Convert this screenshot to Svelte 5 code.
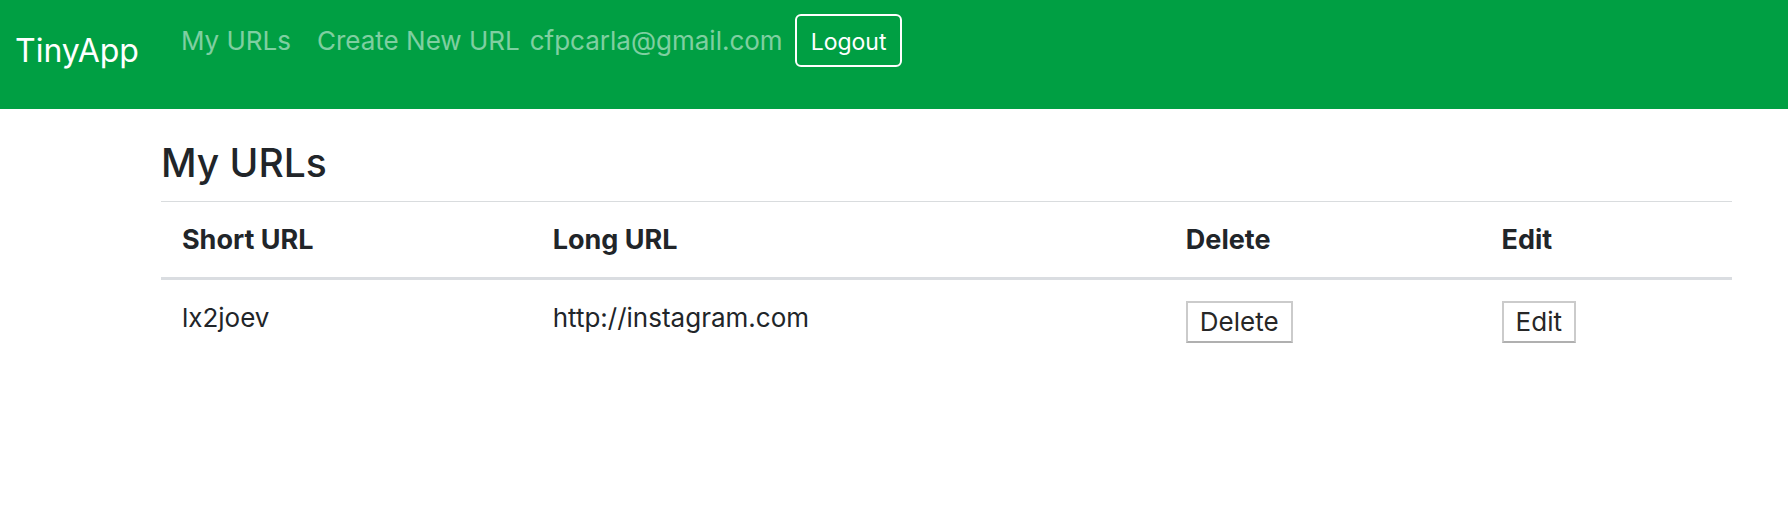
<script>
  const urls = [{ short: 'lx2joev', long: 'http://instagram.com' }];
</script>

<header>
  <nav>
    <a class="brand" href="#home">TinyApp</a>
    <a class="link" href="#urls">My URLs</a>
    <a class="link create" href="#new">Create New URL</a>
    <span class="email">cfpcarla@gmail.com</span>
    <button class="logout" type="button">Logout</button>
  </nav>
</header>

<main>
  <h1>My URLs</h1>
  <table>
    <colgroup>
      <col class="short" />
      <col class="long" />
      <col class="delete" />
      <col class="edit" />
    </colgroup>
    <thead>
      <tr>
        <th scope="col">Short URL</th>
        <th scope="col">Long URL</th>
        <th scope="col">Delete</th>
        <th scope="col">Edit</th>
      </tr>
    </thead>
    <tbody>
      {#each urls as url}
        <tr>
          <td>{url.short}</td>
          <td>{url.long}</td>
          <td><button class="action" type="button">Delete</button></td>
          <td><button class="action" type="button">Edit</button></td>
        </tr>
      {/each}
    </tbody>
  </table>
</main>

<style>
  :global(body) {
    margin: 0;
    background: #fff;
    color: #212529;
    font-family: Inter, 'Liberation Sans', sans-serif;
    font-size: 26px;
    line-height: 40px;
  }

  header {
    background: #009f43;
    padding: 14px 15px 40px;
  }

  nav {
    display: flex;
    align-items: flex-start;
    white-space: nowrap;
  }

  nav a {
    text-decoration: none;
  }

  .brand {
    color: #fff;
    font-size: 32px;
    padding-top: 19px;
    line-height: 36px;
    margin-right: 42px;
  }

  .link,
  .email {
    color: rgba(255, 255, 255, 0.5);
    padding-top: 7px;
  }

  .link {
    margin-right: 26px;
  }

  .create {
    margin-right: 10px;
  }

  .email {
    margin-right: 12px;
  }

  .logout {
    box-sizing: border-box;
    border: 2px solid #fff;
    border-radius: 6px;
    background: transparent;
    color: #fff;
    font: 23px/36px Inter, 'Liberation Sans', sans-serif;
    padding: 8px 14px 5px;
  }

  main {
    padding: 29px 56px 0 9%;
  }

  h1 {
    margin: 0 0 13px;
    font-size: 39px;
    font-weight: 500;
    line-height: 50px;
  }

  table {
    width: 100%;
    table-layout: fixed;
    border-collapse: separate;
    border-spacing: 0;
  }

  .short {
    width: 23.6%;
  }

  .long {
    width: 40.3%;
  }

  .delete {
    width: 20.1%;
  }

  .edit {
    width: 16%;
  }

  th,
  td {
    padding: 18px 21px;
    text-align: left;
    vertical-align: top;
  }

  th {
    border-top: 1px solid #d9dcde;
    border-bottom: 3px solid #dadde1;
    font-size: 27px;
    font-weight: 700;
    padding-bottom: 17px;
  }

  .action {
    display: block;
    box-sizing: border-box;
    margin-top: 3px;
    border: 2px solid #cbcbcb;
    border-bottom-color: #b0b0b0;
    background: #fff;
    color: #272727;
    font: 26px/38px Inter, 'Liberation Sans', sans-serif;
    padding: 0 12px;
  }
</style>
